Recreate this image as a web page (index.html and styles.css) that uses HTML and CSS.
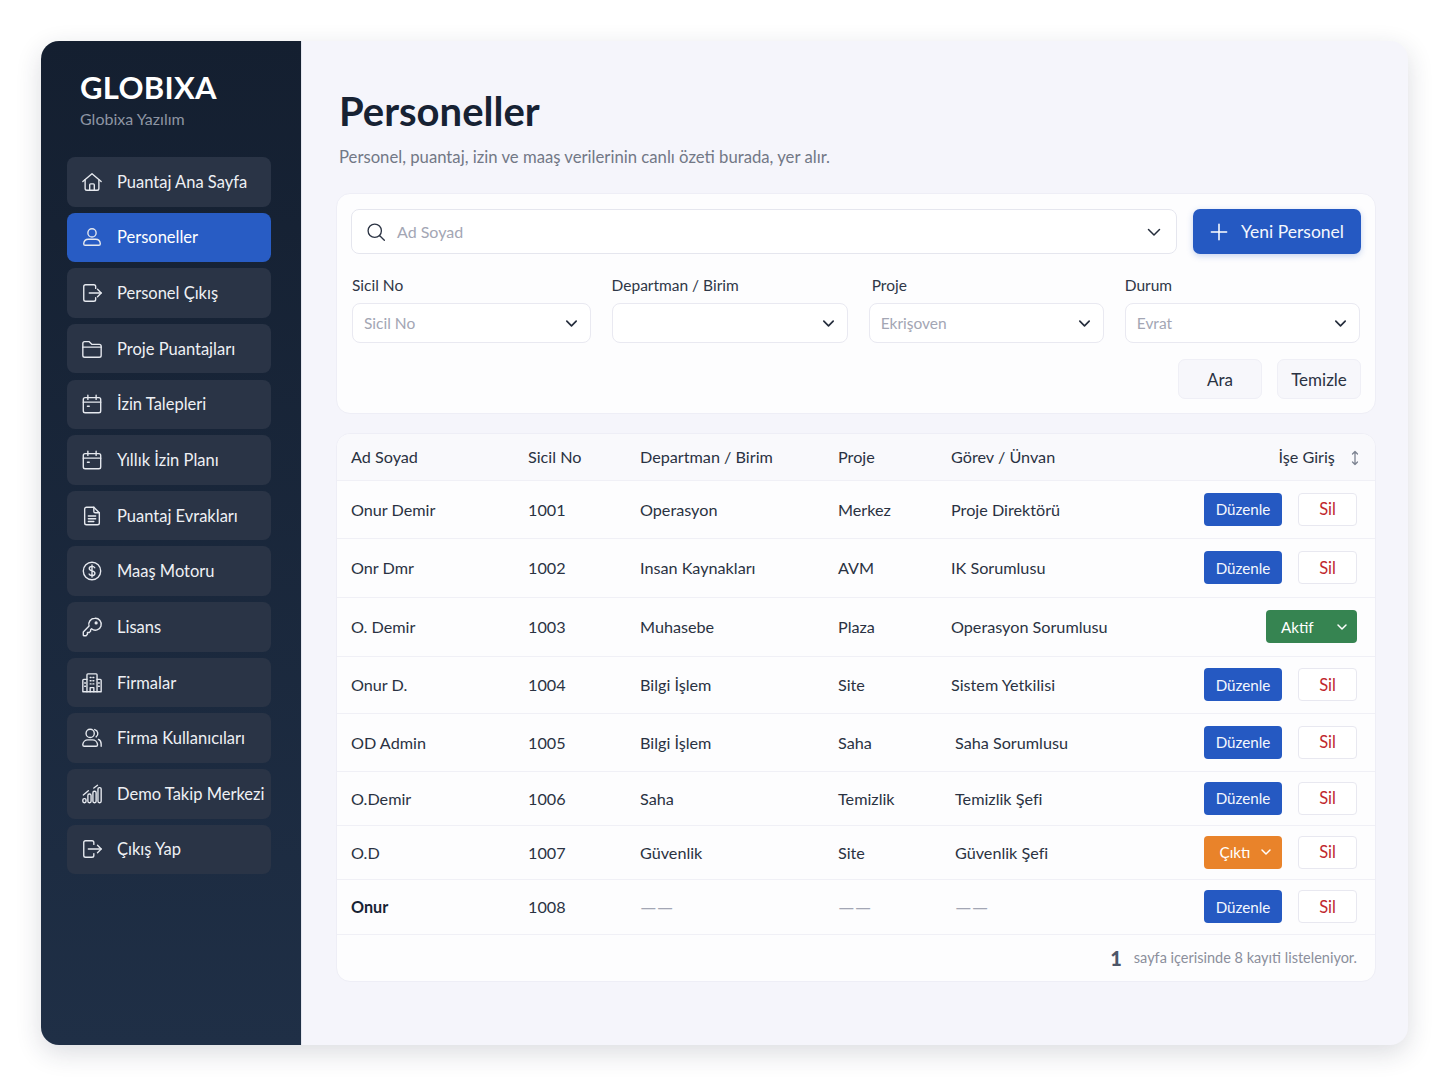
FILE: index.html
```html
<!DOCTYPE html>
<html lang="tr">
<head>
  <meta charset="UTF-8" />
  <title>Personeller</title>
  <link rel="stylesheet" href="styles.css">
</head>
<body>
  <div class="app">
    <aside class="sidebar">
      <div class="brand">
        <div class="brand-name">GLOBIXA</div>
        <div class="brand-sub">Globixa Yazılım</div>
      </div>
      <nav class="nav">
        <a class="nav-item">
          <svg class="nav-icon" viewBox="0 0 24 24"><path d="M2 11.5 12 3l10 8.5"/><path d="M4.5 9.5V19a2 2 0 0 0 2 2h11a2 2 0 0 0 2-2V9.5"/><path d="M9.5 21v-6a1 1 0 0 1 1-1h3a1 1 0 0 1 1 1v6"/></svg>
          <span>Puantaj Ana Sayfa</span>
        </a>
        <a class="nav-item active">
          <svg class="nav-icon" viewBox="0 0 24 24"><circle cx="12" cy="7.5" r="4.5"/><path d="M3 19a5 5 0 0 1 5-4.5h8a5 5 0 0 1 5 4.5v.5a1.5 1.5 0 0 1-1.5 1.5h-15A1.5 1.5 0 0 1 3 19.500z"/></svg>
          <span>Personeller</span>
        </a>
        <a class="nav-item">
          <svg class="nav-icon" viewBox="0 0 24 24"><path d="M16 7V5a2 2 0 0 0-2-2H5a2 2 0 0 0-2 2v14a2 2 0 0 0 2 2h9a2 2 0 0 0 2-2v-2"/><path d="M9 12h13"/><path d="m18 8 4 4-4 4"/></svg>
          <span>Personel Çıkış</span>
        </a>
        <a class="nav-item">
          <svg class="nav-icon" viewBox="0 0 24 24"><path d="M2 6a2 2 0 0 1 2-2h5l3 3h8a2 2 0 0 1 2 2v10a2 2 0 0 1-2 2H4a2 2 0 0 1-2-2z"/><path d="M2 10h20"/></svg>
          <span>Proje Puantajları</span>
        </a>
        <a class="nav-item">
          <svg class="nav-icon" viewBox="0 0 24 24"><rect x="2.500" y="5" width="19" height="16.500" rx="2"/><path d="M2.500 10h19M7.500 2.500V7M16.500 2.500V7M7 14.500h2"/></svg>
          <span>İzin Talepleri</span>
        </a>
        <a class="nav-item">
          <svg class="nav-icon" viewBox="0 0 24 24"><rect x="2.500" y="5" width="19" height="16.500" rx="2"/><path d="M2.500 10h19M7.500 2.500V7M16.500 2.500V7M7 14.500h2"/></svg>
          <span>Yıllık İzin Planı</span>
        </a>
        <a class="nav-item">
          <svg class="nav-icon" viewBox="0 0 24 24"><path d="M14 2.500H6a2 2 0 0 0-2 2v15a2 2 0 0 0 2 2h12a2 2 0 0 0 2-2v-11z"/><path d="M14 2.500V7a1.500 1.500 0 0 0 1.500 1.500H20"/><path d="M8 12h8M8 15h8M8 18h6"/></svg>
          <span>Puantaj Evrakları</span>
        </a>
        <a class="nav-item">
          <svg class="nav-icon" viewBox="0 0 24 24"><circle cx="12" cy="12" r="9.500"/><path d="M15 8.500c-.5-1-1.600-1.500-3-1.500-1.800 0-3 .9-3 2.400 0 3.300 6.200 1.700 6.200 5 0 1.500-1.300 2.600-3.200 2.600-1.500 0-2.700-.6-3.200-1.700M12 5.500v13"/></svg>
          <span>Maaş Motoru</span>
        </a>
        <a class="nav-item">
          <svg class="nav-icon" viewBox="0 0 24 24"><path d="M15 2.500a6.500 6.500 0 0 0-6.200 8.500L2.500 17.500V21a.5.5 0 0 0 .5.500h2.500l1.500-1.500v-2h2l1.500-1.500v-1.500l1-1A6.500 6.500 0 1 0 15 2.500z"/><circle cx="16.500" cy="7.500" r="1"/></svg>
          <span>Lisans</span>
        </a>
        <a class="nav-item">
          <svg class="nav-icon" viewBox="0 0 24 24"><path d="M6.500 21.500V3a1 1 0 0 1 1-1h9a1 1 0 0 1 1 1v18.500"/><path d="M6.500 8H3a1 1 0 0 0-1 1v12.500h20V9a1 1 0 0 0-1-1h-3.500"/><path d="M10 6h1M13 6h1M10 9.500h1M13 9.500h1M10 13h1M13 13h1M10 21.500V17h4v4.500M4 12h1M4 15.500h1M19 12h1M19 15.500h1"/></svg>
          <span>Firmalar</span>
        </a>
        <a class="nav-item">
          <svg class="nav-icon" viewBox="0 0 24 24"><circle cx="10" cy="7" r="4.500"/><path d="M2 19a5.500 5.500 0 0 1 5.500-5h5a5.500 5.500 0 0 1 5.500 5v.5a1.500 1.500 0 0 1-1.500 1.500h-13A1.500 1.500 0 0 1 2 19.500z"/><path d="M15 2.800a4.500 4.500 0 0 1 1.500 8M19 13.500c1.800.8 3 2.600 3 5V21"/></svg>
          <span>Firma Kullanıcıları</span>
        </a>
        <a class="nav-item">
          <svg class="nav-icon" viewBox="0 0 24 24"><rect x="2" y="17" width="3.500" height="4.500" rx="1.500"/><rect x="7.500" y="12" width="3.500" height="9.500" rx="1.500"/><rect x="13" y="9" width="3.500" height="12.500" rx="1.500"/><rect x="18.500" y="5" width="3.500" height="16.500" rx="1.500"/><path d="M2.500 13 8 8.500M14 5.500l4-3"/></svg>
          <span>Demo Takip Merkezi</span>
        </a>
        <a class="nav-item">
          <svg class="nav-icon" viewBox="0 0 24 24"><path d="M14 7V5a2 2 0 0 0-2-2H5a2 2 0 0 0-2 2v14a2 2 0 0 0 2 2h7a2 2 0 0 0 2-2v-2"/><path d="M8 12h14"/><path d="m18 8 4 4-4 4"/></svg>
          <span>Çıkış Yap</span>
        </a>
      </nav>
    </aside>

    <main class="main">
      <h1 class="page-title">Personeller</h1>
      <p class="page-sub">Personel, puantaj, izin ve maaş verilerinin canlı özeti burada, yer alır.</p>

      <section class="card filters">
        <div class="search-row">
          <div class="search-box">
            <svg class="search-icon" viewBox="0 0 24 24"><circle cx="10.500" cy="10.500" r="8"/><path d="m16.500 16.500 5.500 5.500"/></svg>
            <span class="placeholder">Ad Soyad</span>
            <svg class="chevron chevron-lg" viewBox="0 0 16 16"><path d="m2.500 5.500 5.500 5.500 5.500-5.500"/></svg>
          </div>
          <button class="btn-new">
            <svg class="plus" viewBox="0 0 20 20"><path d="M10 1.500v17M1.500 10h17"/></svg>
            Yeni Personel
          </button>
        </div>

        <div class="filter-grid">
          <div class="field">
            <label>Sicil No</label>
            <div class="select"><span class="placeholder">Sicil No</span><svg class="chevron" viewBox="0 0 16 16"><path d="m3 5.500 5 5 5-5"/></svg></div>
          </div>
          <div class="field">
            <label>Departman / Birim</label>
            <div class="select"><span class="placeholder"></span><svg class="chevron" viewBox="0 0 16 16"><path d="m3 5.500 5 5 5-5"/></svg></div>
          </div>
          <div class="field field-inset">
            <label>Proje</label>
            <div class="select"><span class="placeholder">Ekrişoven</span><svg class="chevron" viewBox="0 0 16 16"><path d="m3 5.500 5 5 5-5"/></svg></div>
          </div>
          <div class="field">
            <label>Durum</label>
            <div class="select"><span class="placeholder">Evrat</span><svg class="chevron" viewBox="0 0 16 16"><path d="m3 5.500 5 5 5-5"/></svg></div>
          </div>
        </div>

        <div class="filter-actions">
          <button class="btn-soft">Ara</button>
          <button class="btn-soft">Temizle</button>
        </div>
      </section>

      <section class="card table-card">
        <table class="staff-table">
          <colgroup>
            <col class="col-name"><col class="col-no"><col class="col-dept"><col class="col-proj"><col class="col-role"><col>
          </colgroup>
          <thead>
            <tr>
              <th>Ad Soyad</th>
              <th>Sicil No</th>
              <th>Departman / Birim</th>
              <th>Proje</th>
              <th>Görev / Ünvan</th>
              <th class="th-sort">İşe Giriş <svg class="sort" viewBox="0 0 10 16"><path d="M5 1.500v13M2.500 4 5 1.500 7.500 4M2.500 12 5 14.500 7.500 12"/></svg></th>
            </tr>
          </thead>
          <tbody>
            <tr>
              <td>Onur Demir</td><td>1001</td><td>Operasyon</td><td>Merkez</td><td>Proje Direktörü</td>
              <td><div class="actions"><button class="btn-edit">Düzenle</button><button class="btn-del">Sil</button></div></td>
            </tr>
            <tr>
              <td>Onr Dmr</td><td>1002</td><td>Insan Kaynakları</td><td>AVM</td><td>IK Sorumlusu</td>
              <td><div class="actions"><button class="btn-edit">Düzenle</button><button class="btn-del">Sil</button></div></td>
            </tr>
            <tr>
              <td>O. Demir</td><td>1003</td><td>Muhasebe</td><td>Plaza</td><td>Operasyon Sorumlusu</td>
              <td><div class="actions"><button class="btn-status green"><span>Aktif</span><svg viewBox="0 0 12 12"><path d="m2 4 4 4 4-4"/></svg></button></div></td>
            </tr>
            <tr>
              <td>Onur D.</td><td>1004</td><td>Bilgi İşlem</td><td>Site</td><td>Sistem Yetkilisi</td>
              <td><div class="actions"><button class="btn-edit">Düzenle</button><button class="btn-del">Sil</button></div></td>
            </tr>
            <tr>
              <td>OD Admin</td><td>1005</td><td>Bilgi İşlem</td><td>Saha</td><td class="shift">Saha Sorumlusu</td>
              <td><div class="actions"><button class="btn-edit">Düzenle</button><button class="btn-del">Sil</button></div></td>
            </tr>
            <tr>
              <td>O.Demir</td><td>1006</td><td>Saha</td><td>Temizlik</td><td class="shift">Temizlik Şefi</td>
              <td><div class="actions"><button class="btn-edit">Düzenle</button><button class="btn-del">Sil</button></div></td>
            </tr>
            <tr>
              <td>O.D</td><td>1007</td><td>Güvenlik</td><td>Site</td><td class="shift">Güvenlik Şefi</td>
              <td><div class="actions"><button class="btn-status orange"><span>Çıktı</span><svg viewBox="0 0 12 12"><path d="m2 4 4 4 4-4"/></svg></button><button class="btn-del">Sil</button></div></td>
            </tr>
            <tr>
              <td class="strong">Onur</td><td>1008</td><td class="dash">——</td><td class="dash">——</td><td class="dash shift">——</td>
              <td><div class="actions"><button class="btn-edit">Düzenle</button><button class="btn-del">Sil</button></div></td>
            </tr>
          </tbody>
        </table>
        <div class="table-foot"><b>1</b><span>sayfa içerisinde 8 kayıti listeleniyor.</span></div>
      </section>
    </main>
  </div>
</body>
</html>
```

FILE: styles.css
```css
* {
  box-sizing: border-box;
}

body {
  margin: 0;
  min-height: 1086px;
  padding: 41px 40px 41px 41px;
  background: #fff;
  font-family: 'Lato', 'Noto Sans', sans-serif;
  color: #252d3c;
}

.app {
  display: flex;
  height: 1004px;
  border-radius: 18px;
  overflow: hidden;
  background: #f5f5fb;
  box-shadow: 0 8px 26px rgba(30, 40, 60, 0.16);
}

/* sidebar */
.sidebar {
  flex: 0 0 261px;
  width: 261px;
  min-width: 0;
  padding: 28px 30px 0 26px;
  background: linear-gradient(180deg, #141f30 0%, #1f2f46 100%);
  border-right: 1px solid #e4e6ee;
}

.brand {
  padding-left: 13px;
  height: 88px;
}

.brand-name {
  font-size: 31px;
  line-height: 36px;
  font-weight: 700;
  letter-spacing: 0.3px;
  color: #fff;
}

.brand-sub {
  margin-top: 3px;
  font-size: 16px;
  line-height: 22px;
  color: #8d95a3;
}

.nav {
  display: flex;
  flex-direction: column;
  gap: 6.15px;
}

.nav-item {
  display: flex;
  align-items: center;
  gap: 14px;
  height: 49.5px;
  padding-left: 14px;
  border-radius: 8px;
  background: #2a3446;
  color: #eef0f4;
  font-size: 16.5px;
  white-space: nowrap;
}

.nav-item.active {
  background: #285cc4;
  color: #fff;
}

.nav-icon {
  flex: 0 0 22px;
  width: 22px;
  height: 22px;
  fill: none;
  stroke: #e6e9ef;
  stroke-width: 1.5;
  stroke-linecap: round;
  stroke-linejoin: round;
}

/* main */
.main {
  flex: 1;
  min-width: 0;
  padding: 47px 32px 0 34px;
}

.page-title {
  margin: 0;
  padding-left: 3px;
  font-size: 40px;
  line-height: 46px;
  font-weight: 700;
  color: #172233;
}

.page-sub {
  margin: 11px 0 24px;
  padding-left: 3px;
  font-size: 16.7px;
  line-height: 24px;
  color: #727886;
}

.card {
  background: #fdfdfe;
  border: 1px solid #eeeef6;
  border-radius: 14px;
}

.filters {
  height: 221px;
  padding: 15px 14px 0 14px;
}

.search-row {
  display: flex;
  gap: 16px;
}

.search-box {
  flex: 1;
  display: flex;
  align-items: center;
  height: 45px;
  padding: 0 14px;
  background: #fff;
  border: 1px solid #e5e6ee;
  border-radius: 8px;
}

.search-icon {
  width: 20px;
  height: 20px;
  margin-right: 11px;
  fill: none;
  stroke: #2c3444;
  stroke-width: 1.6;
  stroke-linecap: round;
}

.placeholder {
  flex: 1;
  font-size: 16px;
  color: #a3a6b4;
}

.chevron {
  width: 15px;
  height: 15px;
  fill: none;
  stroke: #252d3c;
  stroke-width: 1.8;
  stroke-linecap: round;
  stroke-linejoin: round;
}

.chevron-lg {
  width: 16px;
  height: 16px;
  stroke-width: 1.5;
}

.btn-new {
  display: flex;
  align-items: center;
  justify-content: center;
  gap: 13px;
  width: 168px;
  height: 45px;
  border: none;
  border-radius: 7px;
  background: #2559c2;
  box-shadow: 0 2px 6px rgba(37, 89, 194, 0.25);
  color: #f4f7fd;
  font: inherit;
  font-size: 17.5px;
}

.plus {
  width: 18px;
  height: 18px;
  fill: none;
  stroke: #fff;
  stroke-width: 1.7;
  stroke-linecap: round;
}

.filter-grid {
  display: grid;
  grid-template-columns: 239px 236.5px 235.5px 235.5px;
  gap: 20.6px;
  margin-top: 21px;
  margin-left: 1px;
}

.field label {
  display: block;
  margin-bottom: 7px;
  font-size: 15.5px;
  line-height: 21px;
  color: #2f3747;
}

.field-inset label {
  padding-left: 3px;
}

.select {
  display: flex;
  align-items: center;
  height: 40px;
  padding: 0 11px;
  background: #fff;
  border: 1px solid #e9e9f1;
  border-radius: 8px;
}

.select .placeholder {
  font-size: 15.5px;
}

.filter-actions {
  display: flex;
  justify-content: flex-end;
  gap: 15px;
  margin-top: 16px;
}

.btn-soft {
  width: 84px;
  height: 40px;
  border: 1px solid #efeff6;
  border-radius: 7px;
  background: #f7f7fb;
  color: #2a3242;
  font: inherit;
  font-size: 17px;
}

/* table */
.table-card {
  margin-top: 19px;
  height: 549px;
  overflow: hidden;
}

.staff-table {
  width: 100%;
  border-collapse: collapse;
  table-layout: fixed;
  font-size: 16.2px;
  color: #2a3242;
}

.col-name { width: 191px; }
.col-no { width: 112px; }
.col-dept { width: 198px; }
.col-proj { width: 113px; }
.col-role { width: 230px; }

.staff-table th {
  height: 46px;
  padding: 0 0 0 14px;
  background: #f9f9fc;
  border-bottom: 1px solid #f0f0f6;
  font-weight: 400;
  text-align: left;
}

.staff-table th:nth-child(n+2),
.staff-table td:nth-child(n+2) {
  padding-left: 0;
}

.staff-table th.th-sort {
  padding-right: 15px;
  text-align: right;
  white-space: nowrap;
}

.sort {
  width: 10px;
  height: 16px;
  margin-left: 11px;
  vertical-align: -3px;
  fill: none;
  stroke: #7d8391;
  stroke-width: 1.3;
  stroke-linecap: round;
  stroke-linejoin: round;
}

.staff-table td {
  padding: 0 0 0 14px;
  border-bottom: 1px solid #f0f0f6;
}

.staff-table tbody tr:nth-child(1) { height: 58px; }
.staff-table tbody tr:nth-child(2) { height: 59px; }
.staff-table tbody tr:nth-child(3) { height: 59px; }
.staff-table tbody tr:nth-child(4) { height: 57px; }
.staff-table tbody tr:nth-child(5) { height: 58px; }
.staff-table tbody tr:nth-child(6) { height: 54px; }
.staff-table tbody tr:nth-child(7) { height: 54px; }
.staff-table tbody tr:nth-child(8) { height: 55px; }

.staff-table td.shift {
  padding-left: 4px;
}

.staff-table td.strong {
  font-weight: 700;
  color: #172233;
}

.staff-table td.dash {
  font-size: 21px;
  line-height: 24px;
  color: #a3a6b4;
}

.actions {
  display: flex;
  justify-content: flex-end;
  gap: 16px;
  padding-right: 18px;
}

.actions button {
  height: 33px;
  border-radius: 4px;
  font: inherit;
  font-size: 15.2px;
}

.btn-edit {
  width: 78px;
  border: none;
  background: #2559c2;
  color: #f4f7fd;
}

.actions .btn-del {
  width: 59px;
  border: 1px solid #e8e8f0;
  background: #fff;
  color: #c0282d;
  font-size: 16.5px;
}

.btn-status {
  display: flex;
  align-items: center;
  border: none;
  color: #fff;
}

.btn-status svg {
  width: 12px;
  height: 12px;
  fill: none;
  stroke: #fff;
  stroke-width: 1.5;
  stroke-linecap: round;
  stroke-linejoin: round;
}

.btn-status.green {
  justify-content: space-between;
  width: 91px;
  padding: 0 9px 0 15px;
  background: #368451;
}

.btn-status.orange {
  justify-content: center;
  gap: 10px;
  width: 78px;
  padding: 0 0 0 6px;
  background: #e9832a;
}

.table-foot {
  display: flex;
  align-items: center;
  justify-content: flex-end;
  gap: 12px;
  height: 46px;
  padding-right: 18px;
  font-size: 14.5px;
  color: #8b8f9c;
}

.table-foot b {
  font-size: 20px;
  font-weight: 900;
  color: #4d5668;
}
```
